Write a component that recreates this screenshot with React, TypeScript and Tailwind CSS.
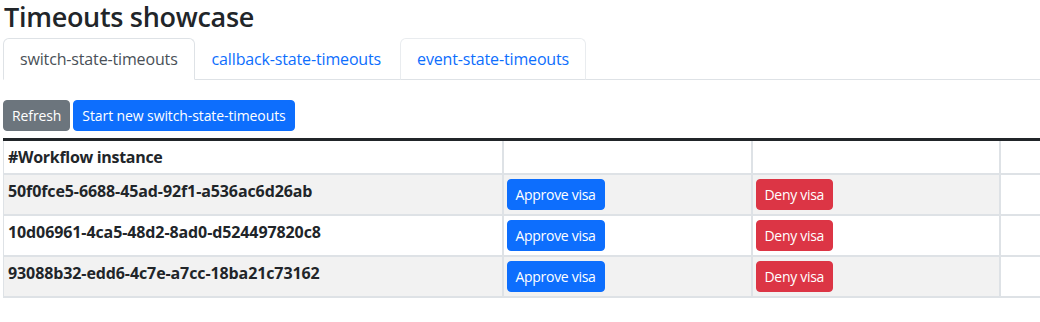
import React from 'react';

const rows = [
  '50f0fce5-6688-45ad-92f1-a536ac6d26ab',
  '10d06961-4ca5-48d2-8ad0-d524497820c8',
  '93088b32-edd6-4c7e-a7cc-18ba21c73162',
];

const tabs = ['switch-state-timeouts', 'callback-state-timeouts', 'event-state-timeouts'];

export default function App() {
  return (
    <div
      className="w-[1040px] h-[322px] overflow-hidden bg-white px-[3px] text-[#212529]"
      style={{ fontFamily: '"Open Sans", "Noto Sans", sans-serif' }}
    >
      <h3 className="text-[27px] leading-[34px] font-semibold tracking-[-0.3px] mb-[4px] pl-px">Timeouts showcase</h3>

      {/* tabs */}
      <div className="flex border-b border-[#dee2e6] w-[1037px]">
        {tabs.map((t, i) => (
          <div
            key={t}
            className={
              'px-4 py-2 text-base leading-6 tracking-[-0.15px] -mb-px border rounded-t-[6px] ' +
              (i === 0
                ? 'border-[#dee2e6] border-b-white bg-white text-[#495057]'
                : i === 2
                ? 'border-[#e9ecef] border-b-[#dee2e6] text-[#0d6efd] ml-[2px]'
                : 'border-transparent text-[#0d6efd]')
            }
          >
            {t}
          </div>
        ))}
      </div>

      <div className="flex gap-[3px] mt-[20px]">
        <button className="bg-[#6c757d] text-white text-sm leading-[21px] tracking-[-0.1px] px-2 py-1 rounded-[4px] border border-[#6c757d]">
          Refresh
        </button>
        <button className="bg-[#0d6efd] text-white text-sm leading-[21px] tracking-[-0.1px] px-2 py-1 rounded-[4px] border border-[#0d6efd]">
          Start new switch-state-timeouts
        </button>
      </div>

      <table className="mt-[7px] border-collapse w-[1246px] table-fixed border-t-[3px] border-t-[#212529]">
        <colgroup>
          <col className="w-[499px]" />
          <col className="w-[249px]" />
          <col className="w-[248px]" />
          <col className="w-[250px]" />
        </colgroup>
        <thead>
          <tr>
            <th className="text-left font-bold leading-6 tracking-[-0.3px] px-1 py-1 border-2 border-t-0 border-[#dee2e6] border-l">#Workflow instance</th>
            <th className="border-2 border-t-0 border-[#dee2e6]"></th>
            <th className="border-2 border-t-0 border-[#dee2e6]"></th>
            <th className="border-2 border-t-0 border-[#dee2e6]"></th>
          </tr>
        </thead>
        <tbody>
          {rows.map((id, i) => {
            const bg = i % 2 === 0 ? 'bg-[#f2f2f2]' : 'bg-white';
            return (
              <tr key={id}>
                <td className={`align-top text-left font-bold leading-6 tracking-[-0.1px] px-1 py-1 border-2 border-[#dee2e6] border-l ${bg}`}>{id}</td>
                <td className={`align-top pl-[3px] pr-1 py-1 border-2 border-[#dee2e6] ${bg}`}>
                  <button className="bg-[#0d6efd] text-white text-sm leading-[21px] tracking-[-0.3px] px-2 py-1 rounded-[4px] border border-[#0d6efd]">
                    Approve visa
                  </button>
                </td>
                <td className={`align-top pl-[3px] pr-1 py-1 border-2 border-[#dee2e6] ${bg}`}>
                  <button className="bg-[#dc3545] text-white text-sm leading-[21px] tracking-[-0.3px] px-2 py-1 rounded-[4px] border border-[#dc3545]">
                    Deny visa
                  </button>
                </td>
                <td className="border-2 border-[#dee2e6] bg-white"></td>
              </tr>
            );
          })}
        </tbody>
      </table>
    </div>
  );
}
